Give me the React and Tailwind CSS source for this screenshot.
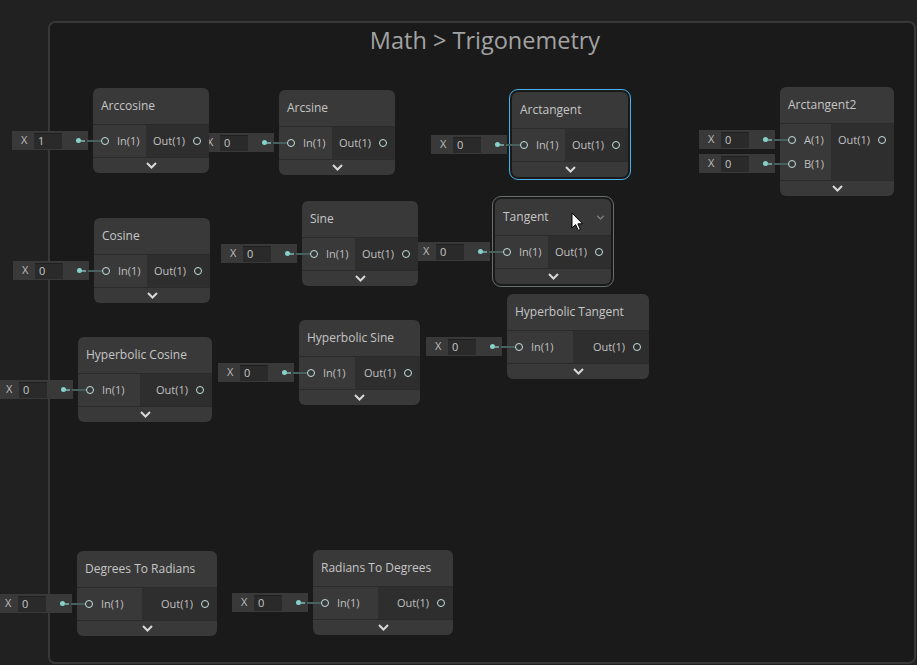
import React from "react";

const nodes = [
  { title: "Arccosine", x: 93, y: 88, w: 116, inW: 53, values: ["1"] },
  { title: "Arcsine", x: 279, y: 90, w: 116, inW: 53 },
  { title: "Arctangent", x: 512, y: 92, w: 116, inW: 53, selected: true },
  { title: "Arctangent2", x: 780, y: 87, w: 114, inW: 51, ports: ["A(1)", "B(1)"] },
  { title: "Cosine", x: 94, y: 218, w: 116, inW: 53 },
  { title: "Sine", x: 302, y: 201, w: 116, inW: 53 },
  { title: "Tangent", x: 495, y: 199, w: 116, inW: 53, hover: true },
  { title: "Hyperbolic Tangent", x: 507, y: 294, w: 142, inW: 66 },
  { title: "Hyperbolic Cosine", x: 78, y: 337, w: 134, inW: 62 },
  { title: "Hyperbolic Sine", x: 299, y: 320, w: 121, inW: 56 },
  { title: "Degrees To Radians", x: 77, y: 551, w: 140, inW: 65 },
  { title: "Radians To Degrees", x: 313, y: 550, w: 140, inW: 65 },
];

const Chevron = ({ className }) => (
  <svg width="11" height="7" viewBox="0 0 11 7" className={className}>
    <polyline points="1,1 5.5,5.5 10,1" fill="none" stroke="currentColor" strokeWidth="2" />
  </svg>
);

const Port = () => (
  <span className="block h-[8px] w-[8px] shrink-0 rounded-full border-[1.5px] border-[#c4e2de]" />
);

// inline "X 0" value field that feeds an input port
const ValueBox = ({ value, top }) => (
  <>
    <div className="absolute z-0 flex h-[19px] w-[76px] items-center bg-[#393939]" style={{ left: -81, top }}>
      <span className="w-[22px] pl-[9px] text-[11px] text-[#bdbdbd]">X</span>
      <div className="flex h-[16px] w-[28px] items-center border-t border-[#1f1f1f] bg-[#2a2a2a] pl-[4px] text-[11px] text-[#c8c8c8]">
        {value}
      </div>
      <span className="ml-[14px] block h-[5px] w-[5px] rounded-full bg-[#86d2cb]" />
    </div>
    <div className="absolute z-20 flex items-center" style={{ left: -12, top: top + 8.5 }}>
      <span className="block h-[2px] w-[4px] bg-[#6f9793]" />
      <span className="ml-[2px] block h-[2px] w-[14px] bg-[#46605e]" />
    </div>
  </>
);

const Node = ({ title, x, y, w, inW, values = ["0"], ports = ["In(1)"], selected, hover }) => (
  <div className="absolute" style={{ left: x, top: y, width: w }}>
    {ports.map((p, i) => (
      <ValueBox key={p} value={values[i] || "0"} top={43 + i * 24} />
    ))}
    <div className="relative z-10">
      {selected && (
        <div className="absolute -inset-[3px] rounded-[9px] border-[1.5px] border-[#48b2e8]" />
      )}
      {hover && (
        <div className="absolute -inset-[3px] rounded-[9px] border-[1.5px] border-[#686e6e]" />
      )}
      <div className="flex h-[36px] items-center justify-between rounded-t-[6px] bg-[#393939] pl-[8px] pr-[6px] text-[12px] text-[#c6c6c6]">
        <span>{title}</span>
        {hover && <Chevron className="h-[5px] w-[9px] text-[#7c7c7c]" />}
      </div>
      <div className="flex border-t border-[#2b2b2b]">
        <div className="shrink-0 bg-[#393939] py-[4px]" style={{ width: inW }}>
          {ports.map((p) => (
            <div key={p} className="flex h-[24px] items-center pl-[8px]">
              <Port />
              <span className="ml-[8px] text-[11px] text-[#c0c0c0]">{p}</span>
            </div>
          ))}
        </div>
        <div className="flex-1 bg-[#2e2e2e] py-[4px]">
          <div className="flex h-[24px] items-center justify-end pr-[8px]">
            <span className="text-[11px] text-[#c0c0c0]">Out(1)</span>
            <span className="ml-[8px]">
              <Port />
            </span>
          </div>
        </div>
      </div>
      <div className="flex h-[16px] items-center justify-center rounded-b-[6px] border-t border-[#2b2b2b] bg-[#393939] text-[#d8d8d8]">
        <Chevron />
      </div>
    </div>
  </div>
);

export default function App() {
  return (
    <div
      className="relative h-[665px] w-[917px] overflow-hidden bg-[#212121] pb-[1px] pl-[48px] pr-[1px] pt-[21px]"
      style={{ fontFamily: '"Open Sans", "Noto Sans", sans-serif' }}
    >
      <div className="flex h-full justify-center rounded-[7px] border-2 border-[#383838] bg-[#1a1a1a] pl-[6px]">
        <div className="text-[23.5px] leading-[34px] text-[#a2a2a2]">Math &gt; Trigonemetry</div>
      </div>

      {nodes.map((n) => (
        <Node key={n.title} {...n} />
      ))}

      <svg className="absolute left-[571px] top-[212px] z-30" width="13" height="20" viewBox="0 0 13 20">
        <path d="M1 1 L1 16 L4.6 12.6 L7.2 18.4 L9.4 17.4 L6.9 11.8 L11.6 11.8 Z" fill="#ffffff" stroke="#000000" strokeWidth="1" />
      </svg>
    </div>
  );
}
